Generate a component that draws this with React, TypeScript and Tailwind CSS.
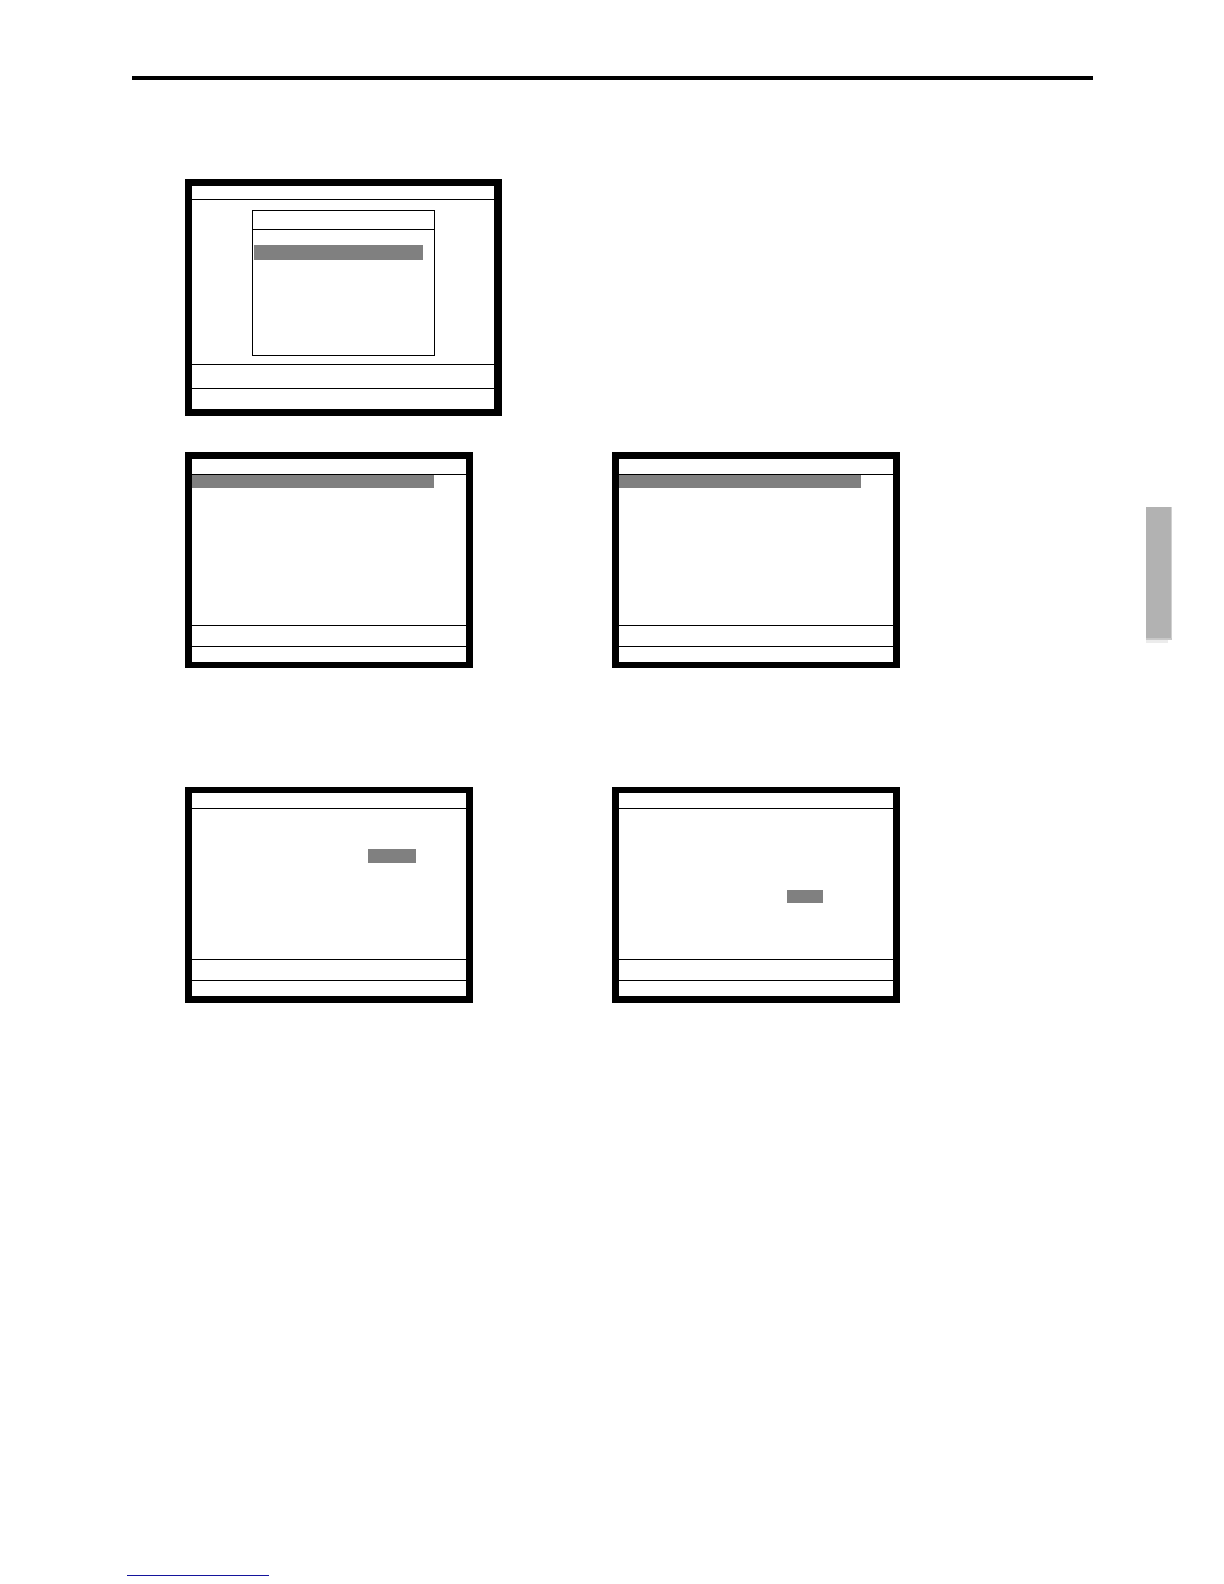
import type { ReactNode } from 'react';

type ScreenProps = { label: string; frame: string; children?: ReactNode };

/** Terminal screen: title bar, body, message line and function-key line. */
function Screen({ label, frame, children }: ScreenProps) {
  return (
    <figure aria-label={label} className={`w-full max-w-[288px] border-x-7 border-black ${frame}`}>
      <div className="h-4 border-b border-black" />
      <div className="flex h-[150px] items-start">{children}</div>
      <div className="h-[21px] border-t border-black" />
      <div className="h-4 border-t border-black" />
    </figure>
  );
}

function MenuScreen() {
  return (
    <figure
      aria-label="Menu window"
      className="w-full max-w-[317px] border-7 border-r-8 border-black"
    >
      <div className="h-[14px] border-b border-black" />
      <div className="h-[164px] pt-[10px] pl-[60px]">
        <div className="h-[146px] w-[183px] border border-black">
          <div className="h-[19px] border-b border-black" />
          <div className="pt-[15px] pl-px">
            <div className="h-[15px] w-[169px] bg-[#808080]" />
          </div>
        </div>
      </div>
      <div className="h-6 border-t border-black" />
      <div className="h-[21px] border-t border-black" />
    </figure>
  );
}

export default function App() {
  return (
    <div className="flex min-h-screen flex-col bg-white">
      <div className="flex items-start gap-[53px] pr-[52px] pl-[132px]">
        <main className="min-w-0 flex-1 pt-[76px]">
          <hr className="h-1 border-0 bg-black" />
          <div className="pt-[99px] pl-[53px]">
            <MenuScreen />
            <div className="mt-9 flex gap-[139px]">
              <Screen label="First list" frame="border-t-7 border-b-6">
                <div className="h-[13px] w-[242px] bg-[#808080]" />
              </Screen>
              <Screen label="Second list" frame="border-t-7 border-b-6">
                <div className="h-[13px] w-[242px] bg-[#808080]" />
              </Screen>
            </div>
            <div className="mt-[119px] flex gap-[139px]">
              <Screen label="First form" frame="border-t-6 border-b-7">
                <div className="mt-10 ml-44 h-[14px] w-12 bg-[#808080]" />
              </Screen>
              <Screen label="Second form" frame="border-t-6 border-b-7">
                <div className="mt-[81px] ml-[168px] h-[13px] w-9 bg-[#808080]" />
              </Screen>
            </div>
          </div>
        </main>
        <aside
          aria-label="Chapter tab"
          className="mt-[507px] flex w-[26px] flex-col"
        >
          <div className="h-[131px] border-r border-[#d0d0d0] bg-[#b2b2b2]" />
          <div className="h-[2px] bg-[#c8c8c8]" />
          <div className="mr-1 h-[3px] bg-[#ececec]" />
        </aside>
      </div>
      <footer className="mt-auto pb-2 pl-[127px]">
        <a
          href="#top"
          aria-label="Back to top"
          className="block h-4 w-[142px] border-b border-[#14149c]"
        />
      </footer>
    </div>
  );
}
